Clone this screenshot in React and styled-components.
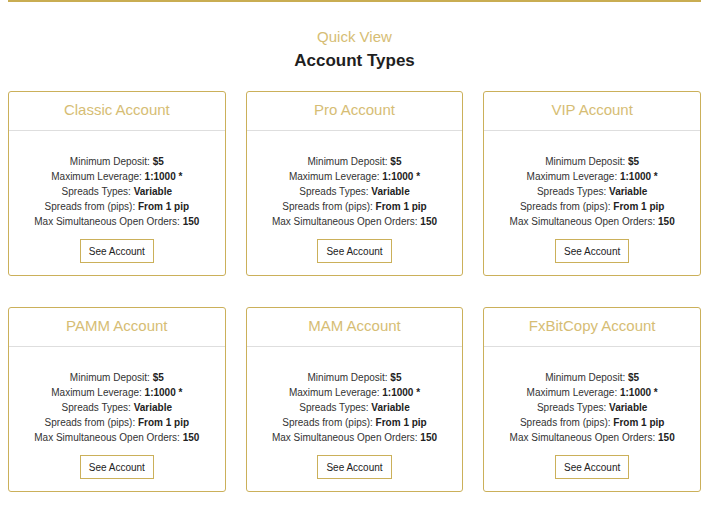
import React from 'react';
import styled, { createGlobalStyle } from 'styled-components';

const accounts = ['Classic Account', 'Pro Account', 'VIP Account', 'PAMM Account', 'MAM Account', 'FxBitCopy Account'];

const specs = [
  ['Minimum Deposit: ', '$5'],
  ['Maximum Leverage: ', '1:1000 *'],
  ['Spreads Types: ', 'Variable'],
  ['Spreads from (pips): ', 'From 1 pip'],
  ['Max Simultaneous Open Orders: ', '150'],
];

function AccountCard({ name }) {
  return (
    <Card>
      <CardHeader>{name}</CardHeader>
      <CardBody>
        <SpecList>
          {specs.map(([label, value]) => (
            <Spec key={label}>
              {label}
              <b>{value}</b>
            </Spec>
          ))}
        </SpecList>
        <SeeButton type="button">See Account</SeeButton>
      </CardBody>
    </Card>
  );
}

export default function App() {
  return (
    <>
      <GlobalStyle />
      <Section>
        <Heading>
          <SubTitle>Quick View</SubTitle>
          <Title>Account Types</Title>
        </Heading>
        <Grid>
          {accounts.map((name) => (
            <AccountCard key={name} name={name} />
          ))}
        </Grid>
      </Section>
    </>
  );
}

const GlobalStyle = createGlobalStyle`
  body {
    margin: 0;
    background: #fff;
    font-family: "Liberation Sans", Arial, sans-serif;
  }
`;

const Section = styled.section`
  width: 693px;
  margin: 0 8px;
  border-top: 2px solid #c9ad52;
`;

const Heading = styled.div`
  text-align: center;
  padding-top: 25px;
`;

const SubTitle = styled.div`
  font-size: 15px;
  line-height: 20px;
  color: #d6bd74;
`;

const Title = styled.h2`
  margin: 4px 0 0;
  font-size: 17px;
  line-height: 20px;
  font-weight: 700;
  color: #1f1f1f;
`;

const Grid = styled.div`
  display: grid;
  grid-template-columns: repeat(3, 1fr);
  column-gap: 20px;
  row-gap: 31px;
  margin-top: 20px;
`;

const Card = styled.div`
  border: 1px solid #cbb05a;
  border-radius: 3px;
  height: 185px;
  box-sizing: border-box;
  text-align: center;
`;

const CardHeader = styled.div`
  height: 38px;
  line-height: 35px;
  font-size: 15px;
  color: #d6bd74;
  border-bottom: 1px solid #dedede;
`;

const CardBody = styled.div`
  padding: 23px 0 0;
  display: flex;
  flex-direction: column;
  align-items: center;
`;

const SpecList = styled.div`
  font-size: 10px;
  line-height: 15px;
  color: #333;
`;

const Spec = styled.div`
  b {
    font-weight: 700;
    color: #222;
  }
`;

const SeeButton = styled.button`
  margin-top: 10px;
  height: 24px;
  padding: 0 8px;
  background: #fff;
  border: 1px solid #cbb05a;
  font-family: "Liberation Sans", Arial, sans-serif;
  font-size: 10px;
  color: #222;
  cursor: pointer;
`;
